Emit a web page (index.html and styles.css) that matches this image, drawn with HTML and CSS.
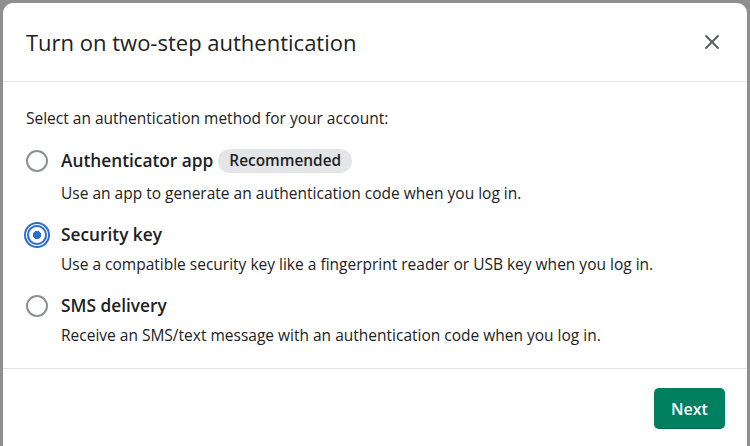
FILE: index.html
```html
<!DOCTYPE html>
<html lang="en">
<head>
<meta charset="utf-8">
<title>Turn on two-step authentication</title>
<link rel="stylesheet" href="styles.css">
</head>
<body>
<div class="dialog">
  <header class="dialog-header">
    <h1 class="dialog-title">Turn on two-step authentication</h1>
    <button class="close" aria-label="Close">
      <svg width="16" height="16" viewBox="0 0 16 16"><path d="M2 2L14 14M14 2L2 14" stroke="#5c5f62" stroke-width="2" stroke-linecap="round" fill="none"/></svg>
    </button>
  </header>
  <section class="dialog-body">
    <p class="intro">Select an authentication method for your account:</p>
    <div class="options">
      <div class="option option--badge">
        <div class="option-row">
          <span class="radio"></span>
          <span class="option-label">Authenticator app</span>
          <span class="badge">Recommended</span>
        </div>
        <p class="option-desc">Use an app to generate an authentication code when you log in.</p>
      </div>
      <div class="option">
        <div class="option-row">
          <span class="radio checked"></span>
          <span class="option-label">Security key</span>
        </div>
        <p class="option-desc">Use a compatible security key like a fingerprint reader or USB key when you log in.</p>
      </div>
      <div class="option">
        <div class="option-row">
          <span class="radio"></span>
          <span class="option-label">SMS delivery</span>
        </div>
        <p class="option-desc">Receive an SMS/text message with an authentication code when you log in.</p>
      </div>
    </div>
  </section>
  <footer class="dialog-footer">
    <button class="btn-primary">Next</button>
  </footer>
</div>
</body>
</html>
```
FILE: styles.css
```css
* { box-sizing: border-box; }
html, body { height: 100%; }
body {
  margin: 0;
  background: #8f8f8f;
  font-family: "Open Sans", "Noto Sans", sans-serif;
  color: #202223;
  overflow: hidden;
}
.dialog {
  margin: 3px 3px 0 3px;
  height: 452px;
  background: #fff;
  border-radius: 10px;
  display: flex;
  flex-direction: column;
}
.dialog-header {
  height: 79px;
  display: flex;
  align-items: center;
  justify-content: space-between;
  padding: 0 17px 0 23px;
  border-bottom: 1px solid #e1e3e5;
}
.dialog-title {
  margin: 0;
  font-size: 22px;
  font-weight: 400;
  line-height: 28px;
  color: #202223;
}
.close {
  width: 36px;
  height: 36px;
  border: 0;
  background: transparent;
  padding: 0;
  display: flex;
  align-items: center;
  justify-content: center;
}
.dialog-body {
  padding: 26px 23px 23px 23px;
  border-bottom: 1px solid #e1e3e5;
}
.intro {
  margin: 0;
  font-size: 15.5px;
  line-height: 20px;
}
.options {
  margin-top: 19px;
  display: flex;
  flex-direction: column;
  gap: 20px;
}
.option-row {
  display: flex;
  align-items: center;
  min-height: 24px;
}
.radio {
  width: 22px;
  height: 22px;
  margin-right: 13px;
  display: flex;
  align-items: center;
  justify-content: center;
  flex: none;
}
.radio::before {
  content: "";
  width: 18px;
  height: 18px;
  border: 2px solid #8c9196;
  border-radius: 50%;
}
.radio.checked::before {
  width: 16px;
  height: 16px;
  border-color: #2c6ecb;
  box-shadow: 0 0 0 1px #fff, 0 0 0 3px #2c6ecb;
  background: radial-gradient(circle, #2c6ecb 0 3.8px, #fff 4.4px);
}
.option-label {
  font-size: 17.3px;
  font-weight: 600;
  line-height: 24px;
}
.badge {
  margin: 2px 0 2px 5px;
  height: 24px;
  padding: 0 11px;
  border-radius: 12px;
  background: #e4e5e7;
  font-size: 15.4px;
  font-weight: 600;
  line-height: 24px;
}
.option-desc {
  margin: 7px 0 0 35px;
  font-size: 15.5px;
  line-height: 20px;
  color: #202223;
}
.option--badge .option-desc {
  margin-top: 8px;
}
.dialog-footer {
  display: flex;
  justify-content: flex-end;
  padding: 19px 22px;
}
.btn-primary {
  width: 71px;
  height: 41px;
  border: 0;
  border-radius: 5px;
  background: #008060;
  color: #fff;
  font-family: inherit;
  font-size: 16px;
  font-weight: 600;
  box-shadow: inset 0 -1px 0 rgba(0,0,0,0.2);
}
```
